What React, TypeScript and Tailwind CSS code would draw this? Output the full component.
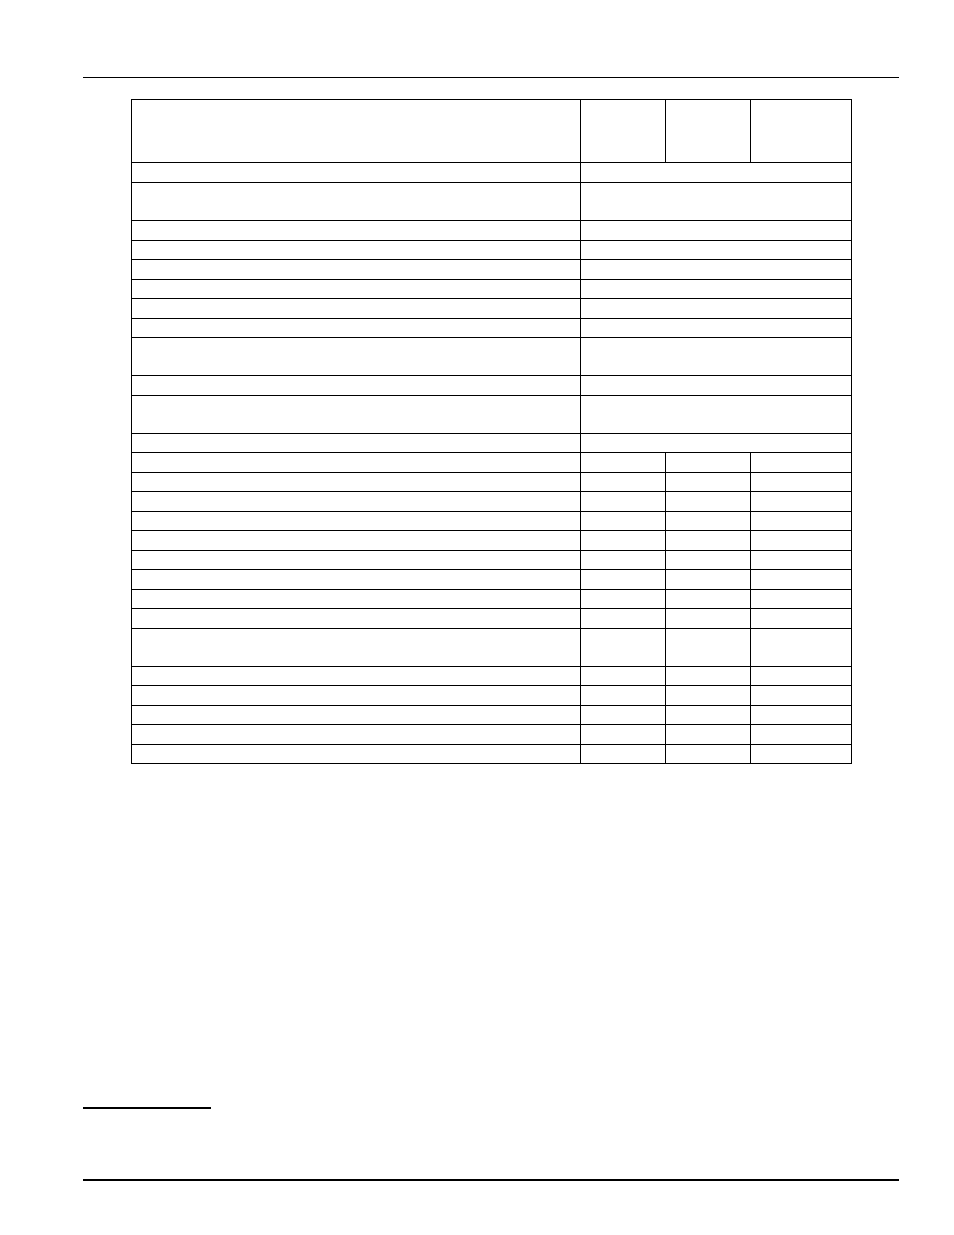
const spanRows = [20, 38, 20, 19, 20, 19, 20, 19, 38, 20, 38, 19];
const splitRows = [20, 19, 20, 19, 20, 19, 20, 19, 20, 38, 19, 20, 19, 20, 19];

function SpanRow({ h }: { h: number }) {
  return (
    <div className="flex border-b border-black" style={{ height: h }}>
      <div className="w-[449px] shrink-0 border-r border-black" />
      <div className="flex-1" />
    </div>
  );
}

function SplitRow({ h }: { h: number }) {
  return (
    <div className="flex border-b border-black" style={{ height: h }}>
      <div className="w-[449px] shrink-0 border-r border-black" />
      <div className="w-[85px] shrink-0 border-r border-black" />
      <div className="w-[85px] shrink-0 border-r border-black" />
      <div className="flex-1" />
    </div>
  );
}

export default function App() {
  return (
    <div className="w-[954px] h-[1235px] bg-white font-['Liberation_Sans',Arial,sans-serif] pt-[77px]">
      <div className="ml-[83px] w-[816px] h-px bg-black" />

      <div className="ml-[131px] mt-[21px] w-[721px] border-l border-t border-r border-black">
        <SplitRow h={63} />
        {spanRows.map((h, i) => (
          <SpanRow key={"s" + i} h={h} />
        ))}
        {splitRows.map((h, i) => (
          <SplitRow key={"p" + i} h={h} />
        ))}
      </div>

      <div className="ml-[83px] mt-[343px] w-[128px] h-[2px] bg-black" />
      <div className="ml-[83px] mt-[70px] w-[816px] h-[2px] bg-black" />
    </div>
  );
}
